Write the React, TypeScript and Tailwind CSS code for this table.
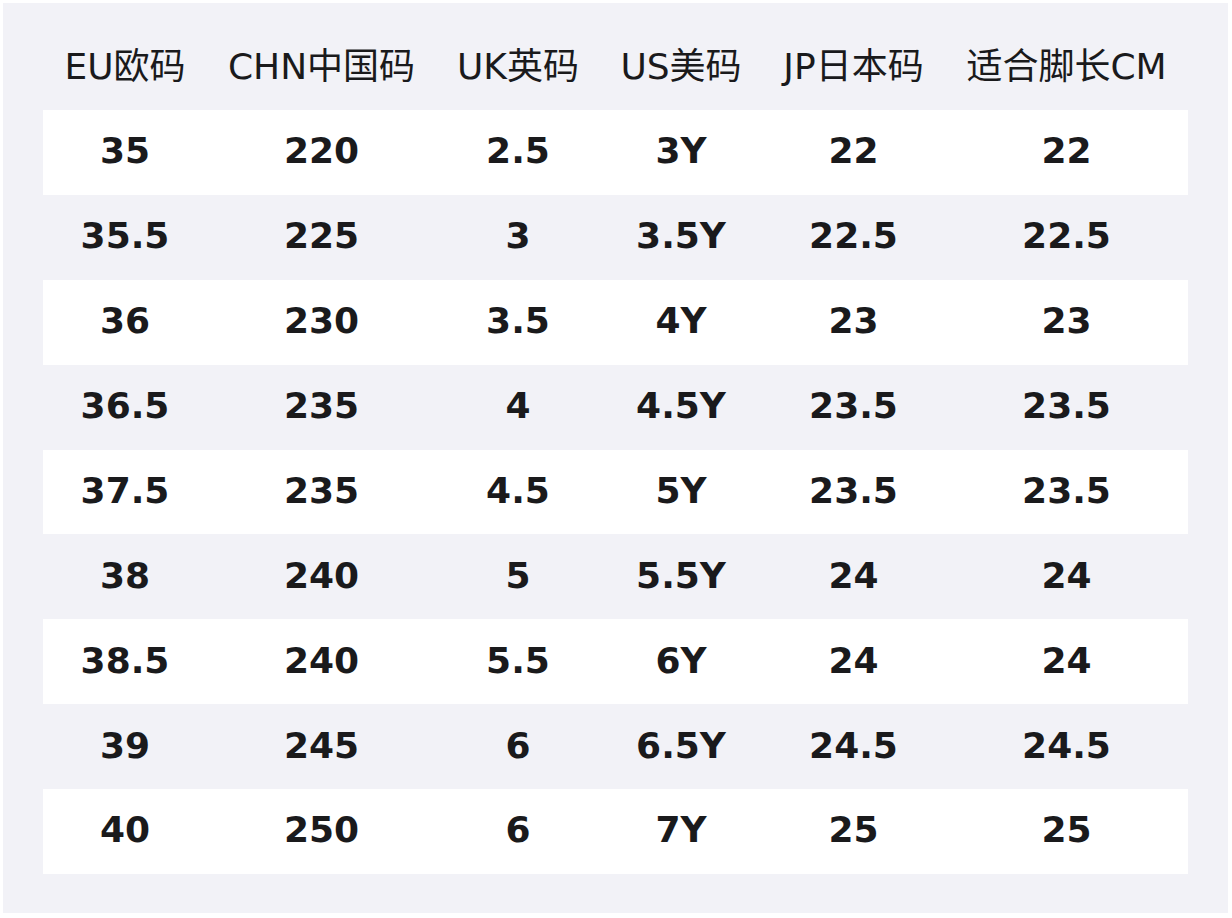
import React from "react";

const headers = ["EU欧码", "CHN中国码", "UK英码", "US美码", "JP日本码", "适合脚长CM"];
const rows: string[][] = [
  ["35", "220", "2.5", "3Y", "22", "22"],
  ["35.5", "225", "3", "3.5Y", "22.5", "22.5"],
  ["36", "230", "3.5", "4Y", "23", "23"],
  ["36.5", "235", "4", "4.5Y", "23.5", "23.5"],
  ["37.5", "235", "4.5", "5Y", "23.5", "23.5"],
  ["38", "240", "5", "5.5Y", "24", "24"],
  ["38.5", "240", "5.5", "6Y", "24", "24"],
  ["39", "245", "6", "6.5Y", "24.5", "24.5"],
  ["40", "250", "6", "7Y", "25", "25"],
];

const grid = "grid grid-cols-[164px_229px_164px_162px_183px_243px]";

export default function App() {
  return (
    <div
      className="w-[1232px] h-[918px] bg-white p-[3px] pr-[4px] pb-[5px]"
      style={{ fontFamily: '"DejaVu Sans", "Noto Sans CJK SC", sans-serif' }}
    >
      <div className="w-full h-full bg-[#f2f2f7] px-[40px] pb-[40px] text-[#1a1a1c]">
        <div className={`${grid} h-[107px] pt-[20px] items-center`}>
          {headers.map((h) => (
            <div key={h} className="text-center text-[36px] leading-none whitespace-nowrap">
              {h}
            </div>
          ))}
        </div>
        {rows.map((r, i) => (
          <div
            key={i}
            className={`${grid} h-[84.875px] pb-[2px] items-center ${i % 2 === 0 ? "bg-white" : ""}`}
          >
            {r.map((c, j) => (
              <div key={j} className="text-center text-[36px] font-bold leading-none">
                {c}
              </div>
            ))}
          </div>
        ))}
      </div>
    </div>
  );
}
